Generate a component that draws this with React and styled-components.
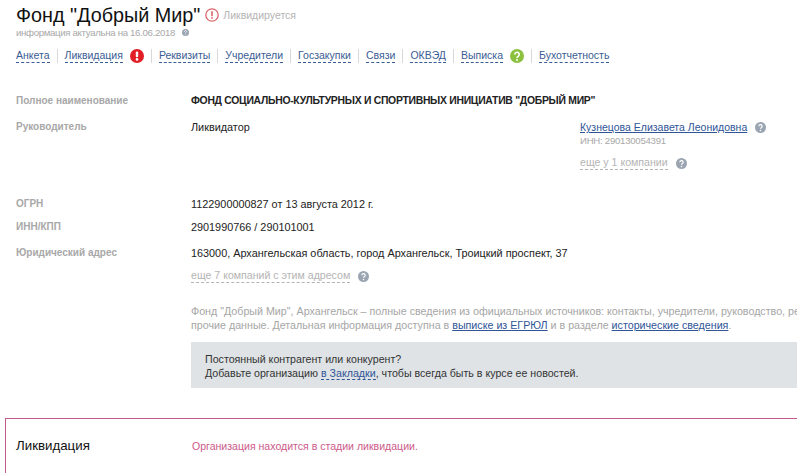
import React from "react";
import styled, { createGlobalStyle } from "styled-components";

const GlobalStyle = createGlobalStyle`
  html, body {
    margin: 0;
    padding: 0;
    height: 100%;
    overflow: hidden;
    background: #fff;
  }
  body {
    font-family: "Liberation Sans", Arial, sans-serif;
    font-size: 11px;
    color: #222;
  }
`;

const Page = styled.div`
  width: 797px;
  height: 473px;
  overflow: hidden;
`;

const Header = styled.header`
  padding: 2px 0 0 16px;
`;

const TitleRow = styled.div`
  display: flex;
  align-items: center;
  height: 26px;
`;

const Title = styled.h1`
  margin: 0;
  font-size: 19.8px;
  font-weight: 400;
  color: #111;
  white-space: nowrap;
`;

const StatusText = styled.span`
  margin-left: 4px;
  font-size: 10.5px;
  color: #b4b4b4;
  white-space: nowrap;
`;

const Actual = styled.div`
  display: flex;
  align-items: center;
  gap: 7px;
  height: 14px;
  margin-top: -3px;
  font-size: 9.6px;
  letter-spacing: -0.3px;
  color: #a8a8a8;
`;

const Nav = styled.nav`
  display: flex;
  align-items: center;
  height: 16px;
  margin-top: 9px;
`;

const NavItem = styled.div`
  display: flex;
  align-items: center;
  gap: 7px;
  padding: 0 7px;
  height: 14px;
  border-left: 1px solid #d8d8d8;

  &:first-child {
    padding-left: 0;
    border-left: 0;
  }
`;

const NavLink = styled.a`
  font-size: 10.5px;
  line-height: 13px;
  color: #3a5c94;
  border-bottom: 1px dashed #3a5c94;
  white-space: nowrap;
`;

const Main = styled.main`
  padding: 30px 0 0 16px;
`;

const Row = styled.div`
  display: grid;
  grid-template-columns: 175px 389px 1fr;
  line-height: 14px;
  margin-bottom: ${(p) => p.$gap ?? 11}px;
`;

const Label = styled.div`
  font-weight: 700;
  font-size: 10px;
  color: #a8a8a8;
`;

const Value = styled.div`
  color: #222;
  font-weight: ${(p) => (p.$bold ? 700 : 400)};
  font-size: ${(p) => (p.$bold ? "10.4px" : "10.85px")};
  letter-spacing: ${(p) => (p.$bold ? "-0.28px" : "0")};
  white-space: nowrap;
`;

const Muted = styled.div`
  color: #a8a8a8;
  line-height: 14px;
  font-size: 9.6px;
  letter-spacing: -0.25px;
`;

const PersonLink = styled.a`
  color: #2f5597;
  text-decoration: underline;
  font-size: 10.5px;
  padding-right: 3px;
  white-space: nowrap;
`;

const More = styled.div`
  display: flex;
  align-items: center;
  gap: 8px;
  margin-top: ${(p) => p.$top || 0}px;
`;

const MoreLink = styled.a`
  color: #b4b4b4;
  font-size: 10.6px;
  line-height: 13px;
  border-bottom: 1px dashed #b4b4b4;
  white-space: nowrap;
`;

const Person = styled.div`
  display: flex;
  align-items: center;
  gap: 5px;
`;

const Description = styled.p`
  margin: 21px 0 0 175px;
  width: 640px;
  font-size: 10.7px;
  line-height: 14px;
  color: #a6a6a6;
  white-space: nowrap;
`;

const TextLink = styled.a`
  color: #2f5597;
  text-decoration: underline;
`;

const Banner = styled.div`
  margin: 10px 0 0 175px;
  height: 46px;
  box-sizing: border-box;
  padding: 10px 14px;
  background: #dfe3e6;
  font-size: 10.65px;
  line-height: 14px;
  color: #333;
  white-space: nowrap;
`;

const DashedLink = styled.a`
  color: #2f5597;
  border-bottom: 1px dashed #2f5597;
`;

const Section = styled.section`
  display: flex;
  align-items: center;
  margin-top: 30px;
  margin-left: 5px;
  height: 70px;
  border: 1px solid #c4578c;
  border-right: 0;
  border-bottom: 0;
  padding: 0 0 16px 10px;
  box-sizing: border-box;
`;

const SectionTitle = styled.h2`
  margin: 0;
  width: 176px;
  font-size: 13.3px;
  font-weight: 400;
  color: #111;
`;

const Alert = styled.div`
  color: #cc5a8a;
  font-size: 10.55px;
`;

const Help = ({ size = 11, color = "#9aa5b1" }) => (
  <svg width={size} height={size} viewBox="0 0 12 12" style={{ flex: "none" }}>
    <circle cx="6" cy="6" r="6" fill={color} />
    <path d="M4.2 4.7a1.8 1.8 0 1 1 2.7 1.5c-.6.4-.9.6-.9 1.2" fill="none" stroke="#fff" strokeWidth="1.3" />
    <circle cx="6" cy="9.2" r=".8" fill="#fff" />
  </svg>
);

const Mark = ({ fill, children }) => (
  <svg width="14" height="14" viewBox="0 0 14 14" style={{ flex: "none" }}>
    <circle cx="7" cy="7" r="7" fill={fill} />
    {children}
  </svg>
);

const Exclaim = () => (
  <Mark fill="#e21f26">
    <rect x="5.8" y="2.5" width="2.4" height="5.8" rx="1" fill="#fff" />
    <circle cx="7" cy="10.4" r="1.3" fill="#fff" />
  </Mark>
);

const Query = () => (
  <Mark fill="#8cc13f">
    <path d="M4.8 5.5a2.2 2.2 0 1 1 3.4 1.8c-.8.5-1.2.8-1.2 1.6" fill="none" stroke="#fff" strokeWidth="1.6" />
    <circle cx="7" cy="11" r="1" fill="#fff" />
  </Mark>
);

const StatusIcon = () => (
  <svg width="14" height="14" viewBox="0 0 14 14" style={{ flex: "none", marginLeft: 5 }}>
    <circle cx="7" cy="7" r="6.2" fill="none" stroke="#d9686c" strokeWidth="1.3" />
    <rect x="6.2" y="3.2" width="1.6" height="5" fill="#d9686c" />
    <rect x="6.2" y="9.2" width="1.6" height="1.6" fill="#d9686c" />
  </svg>
);

const navItems = [
  { label: "Анкета" },
  { label: "Ликвидация", icon: <Exclaim /> },
  { label: "Реквизиты" },
  { label: "Учредители" },
  { label: "Госзакупки" },
  { label: "Связи" },
  { label: "ОКВЭД" },
  { label: "Выписка", icon: <Query /> },
  { label: "Бухотчетность" },
];

export default function App() {
  return (
    <Page>
      <GlobalStyle />
      <Header>
        <TitleRow>
          <Title>Фонд "Добрый Мир"</Title>
          <StatusIcon />
          <StatusText>Ликвидируется</StatusText>
        </TitleRow>
        <Actual>
          информация актуальна на 16.06.2018
          <Help size={7} />
        </Actual>
        <Nav>
          {navItems.map((item) => (
            <NavItem key={item.label}>
              <NavLink>{item.label}</NavLink>
              {item.icon}
            </NavItem>
          ))}
        </Nav>
      </Header>
      <Main>
        <Row $gap={12}>
          <Label>Полное наименование</Label>
          <Value $bold>ФОНД СОЦИАЛЬНО-КУЛЬТУРНЫХ И СПОРТИВНЫХ ИНИЦИАТИВ "ДОБРЫЙ МИР"</Value>
        </Row>
        <Row $gap={27}>
          <Label>Руководитель</Label>
          <Value>Ликвидатор</Value>
          <div>
            <Person>
              <PersonLink>Кузнецова Елизавета Леонидовна</PersonLink>
              <Help />
            </Person>
            <Muted>ИНН: 290130054391</Muted>
            <More $top={8}>
              <MoreLink>еще у 1 компании</MoreLink>
              <Help />
            </More>
          </div>
        </Row>
        <Row $gap={9}>
          <Label>ОГРН</Label>
          <Value>1122900000827 от 13 августа 2012 г.</Value>
        </Row>
        <Row $gap={12}>
          <Label>ИНН/КПП</Label>
          <Value>2901990766 / 290101001</Value>
        </Row>
        <Row $gap={9}>
          <Label>Юридический адрес</Label>
          <Value>163000, Архангельская область, город Архангельск, Троицкий проспект, 37</Value>
        </Row>
        <Row $gap={0}>
          <div />
          <More>
            <MoreLink>еще 7 компаний с этим адресом</MoreLink>
            <Help />
          </More>
        </Row>
        <Description>
          Фонд "Добрый Мир", Архангельск – полные сведения из официальных источников: контакты, учредители, руководство, реквизиты и
          <br />
          прочие данные. Детальная информация доступна в <TextLink>выписке из ЕГРЮЛ</TextLink> и в разделе{" "}
          <TextLink>исторические сведения</TextLink>.
        </Description>
        <Banner>
          Постоянный контрагент или конкурент?
          <br />
          Добавьте организацию <DashedLink>в Закладки</DashedLink>, чтобы всегда быть в курсе ее новостей.
        </Banner>
      </Main>
      <Section>
        <SectionTitle>Ликвидация</SectionTitle>
        <Alert>Организация находится в стадии ликвидации.</Alert>
      </Section>
    </Page>
  );
}
